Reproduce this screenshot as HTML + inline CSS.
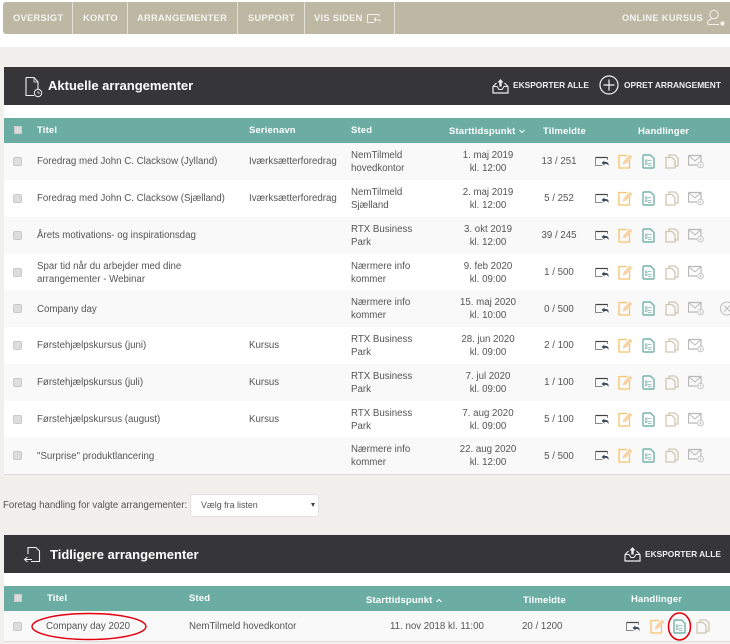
<!DOCTYPE html>
<html><head><meta charset="utf-8"><style>
html,body{margin:0;padding:0}
body{width:730px;height:644px;overflow:hidden;position:relative;background:#fff;font-family:"Liberation Sans",sans-serif;color:#555;font-size:9.7px;filter:blur(.3px)}
div,span,svg{position:absolute}
.t{white-space:nowrap;line-height:13px}
.nav{top:12px;color:#f4f3ee;font-weight:bold;font-size:9.3px;letter-spacing:.3px;line-height:13px;white-space:nowrap}
.sep{top:2px;width:1px;height:32px;background:#e4e2d8}
.h{color:#fff;font-weight:bold;font-size:9.5px;line-height:12px;white-space:nowrap;letter-spacing:.15px}
.dh{color:#fff;font-weight:bold;font-size:13px;line-height:16px;white-space:nowrap}
.ex{color:#eee;font-weight:bold;font-size:8.4px;line-height:12px;white-space:nowrap}
.r{left:4px;width:726px;height:37px}
.o{background:#f9f9f9}
.cb{left:9px;top:14px;width:7px;height:7px;background:#ddd;border:1px solid #c9c9c9;border-radius:2px}
.c{text-align:center;width:100px;white-space:nowrap;line-height:13px}
.l{white-space:nowrap;line-height:13px}
</style></head><body>
<svg width="0" height="0" style="left:0;top:0"><defs>
<symbol id="sh" viewBox="0 0 15 15"><path d="M.5 3.500h12v2.500M.5 3.500v8h7" fill="none" stroke="#8a8a8a"/><path d="M.5 3.500h12" stroke="#444" stroke-width="1.200"/><path d="M9.500 6.500l-3 2.500 3 2.500v-1.500h2.500l1.500 2v-2.500l-1.500-1.500h-2.500z" fill="#3f4d5c"/></symbol>
<symbol id="ed" viewBox="0 0 15 15"><path d="M9 1.500H1v12.500h10.500V6" fill="none" stroke="#f6c46a" stroke-width="1.300"/><path d="M4.500 10.500l1.200-3.500 6-6.500 2.800 2.500-6.200 6.500z" fill="#f8d3a6"/></symbol>
<symbol id="dc" viewBox="0 0 13 15"><path d="M1 2a1 1 0 0 1 1-1h6.500L12 4.500V13a1 1 0 0 1-1 1H2a1 1 0 0 1-1-1z" fill="none" stroke="#74b2a8" stroke-width="1.400"/><path d="M3.500 6h1.500v1.500H3.500zM3.500 9h1.500v1.500H3.500zM6 6.500h3.500M6 9.500h3.500M6 11.500h3.500" fill="none" stroke="#9cc6bf"/></symbol>
<symbol id="cp" viewBox="0 0 14 15"><path d="M1 3.500h6l3 3V14H1z" fill="none" stroke="#cfc6b2" stroke-width="1.300"/><path d="M4 3V1h6l3 3v8h-3" fill="none" stroke="#cfc6b2" stroke-width="1.300"/></symbol>
<symbol id="ml" viewBox="0 0 16 15"><path d="M.5 1.500h12.500v7M.5 1.500V11h8.500" fill="none" stroke="#b8b8b8" stroke-width="1.200"/><path d="M.5 1.500L7 7l6-5.500" fill="none" stroke="#b8b8b8"/><circle cx="12.500" cy="11" r="2.800" fill="#fff" stroke="#c4c4c4"/><circle cx="12.500" cy="11" r="1" fill="#c4c4c4"/></symbol>
<symbol id="xp" viewBox="0 0 17 16"><path d="M1 8.500V15h15V8.500M1 8.500L4.500 5M16 8.500L12.500 5" fill="none" stroke="#eee" stroke-width="1.200"/><path d="M1 8.500h4l2 3h3l2-3h4" fill="none" stroke="#eee"/><path d="M7.300 8.500V4.500H5.500L8.500 1l3 3.500H9.700v4z" fill="#eee"/></symbol>
</defs></svg>

<div style="left:0;top:47px;width:730px;height:597px;background:#f1f0ec"></div>

<div style="left:3px;top:2px;width:727px;height:32px;background:#bdb8a3;border-radius:3px 0 0 3px"></div>
<div class="nav" style="left:13px">OVERSIGT</div><div class="sep" style="left:72px"></div>
<div class="nav" style="left:83px">KONTO</div><div class="sep" style="left:127px"></div>
<div class="nav" style="left:137px">ARRANGEMENTER</div><div class="sep" style="left:237px"></div>
<div class="nav" style="left:248px">SUPPORT</div><div class="sep" style="left:304px"></div>
<div class="nav" style="left:314px">VIS SIDEN</div><div class="sep" style="left:394px"></div>
<svg style="left:367px;top:12px" width="16" height="13" viewBox="0 0 16 13"><path d="M.5 2.500h11.500v2M.5 2.500v8h7" fill="none" stroke="#f1f0ea"/><path d="M9 5l-2.500 2.500L9 10V8.500h3l1.500 2V7.500H9z" fill="#f1f0ea"/></svg>
<div class="nav" style="left:622px">ONLINE KURSUS</div>
<svg style="left:706px;top:9px" width="20" height="19" viewBox="0 0 20 19"><circle cx="8" cy="5.500" r="4.200" fill="none" stroke="#f1f0ea"/><path d="M5.500 10Q1.500 11.500 1.500 14Q1.500 15.500 3 15.500H13" fill="none" stroke="#f1f0ea"/><circle cx="16.500" cy="14.500" r="2.200" fill="#f1f0ea"/></svg>

<!-- Panel 1 -->
<div style="left:4px;top:67px;width:726px;height:407px;background:#fff;border-bottom:1px solid #ddd"></div>
<div style="left:4px;top:67px;width:726px;height:38px;background:#363638"></div>
<svg style="left:25px;top:76px" width="19" height="22" viewBox="0 0 19 22"><path d="M1 1.500h8l4 4.500v7M1 1.500V19.500h8" fill="none" stroke="#eee" stroke-width="1.100"/><path d="M9 1.500V6h4" fill="none" stroke="#eee" stroke-width=".8"/><circle cx="13" cy="17" r="3.700" fill="#363638" stroke="#eee"/><path d="M13 15v2h2" fill="none" stroke="#eee" stroke-width=".8"/></svg>
<div class="dh" style="left:48px;top:78px">Aktuelle arrangementer</div>
<svg style="left:492px;top:78px" width="17" height="16"><use href="#xp"/></svg>
<div class="ex" style="left:513px;top:79px">EKSPORTER ALLE</div>
<svg style="left:599px;top:75px" width="20" height="20" viewBox="0 0 20 20"><circle cx="10" cy="10" r="9" fill="none" stroke="#f4f4f4" stroke-width="1.200"/><path d="M10 4.500v11M4.500 10h11" stroke="#f4f4f4" stroke-width="1.200"/></svg>
<div class="ex" style="left:624px;top:79px">OPRET ARRANGEMENT</div>

<div style="left:4px;top:118px;width:726px;height:25px;background:#6bada3"></div>
<div style="left:14px;top:126px;width:6px;height:6px;background:#dcdcdc;border:1px solid #ccc"></div>
<div class="h" style="left:37px;top:125px">Titel</div>
<div class="h" style="left:249px;top:125px">Serienavn</div>
<div class="h" style="left:351px;top:125px">Sted</div>
<div class="h" style="left:449px;top:126px">Starttidspunkt</div>
<svg style="left:519px;top:129px" width="6" height="5" viewBox="0 0 6 5"><path d="M.5 1L3 3.500 5.500 1" fill="none" stroke="#fff"/></svg>
<div class="h" style="left:543px;top:126px">Tilmeldte</div>
<div class="h" style="left:638px;top:126px">Handlinger</div>

<div class="r o" style="top:143px"><div class="cb"></div><div class="l" style="left:33px;top:12px">Foredrag med John C. Clacksow (Jylland)</div><div class="l" style="left:245px;top:12px">Iværksætterforedrag</div><div class="l" style="left:347px;top:6px">NemTilmeld<br>hovedkontor</div><div class="c" style="left:434px;top:6px">1. maj 2019<br>kl. 12:00</div><div class="c" style="left:505px;top:12px">13 / 251</div>
<svg style="left:591px;top:11px" width="15" height="15"><use href="#sh"/></svg><svg style="left:614px;top:11px" width="15" height="15"><use href="#ed"/></svg><svg style="left:638px;top:11px" width="13" height="15"><use href="#dc"/></svg><svg style="left:661px;top:11px" width="14" height="15"><use href="#cp"/></svg><svg style="left:684px;top:11px" width="16" height="15"><use href="#ml"/></svg></div>

<div class="r" style="top:180px"><div class="cb"></div><div class="l" style="left:33px;top:12px">Foredrag med John C. Clacksow (Sjælland)</div><div class="l" style="left:245px;top:12px">Iværksætterforedrag</div><div class="l" style="left:347px;top:6px">NemTilmeld<br>Sjælland</div><div class="c" style="left:434px;top:6px">2. maj 2019<br>kl. 12:00</div><div class="c" style="left:505px;top:12px">5 / 252</div>
<svg style="left:591px;top:11px" width="15" height="15"><use href="#sh"/></svg><svg style="left:614px;top:11px" width="15" height="15"><use href="#ed"/></svg><svg style="left:638px;top:11px" width="13" height="15"><use href="#dc"/></svg><svg style="left:661px;top:11px" width="14" height="15"><use href="#cp"/></svg><svg style="left:684px;top:11px" width="16" height="15"><use href="#ml"/></svg></div>

<div class="r o" style="top:217px"><div class="cb"></div><div class="l" style="left:33px;top:12px">Årets motivations- og inspirationsdag</div><div class="l" style="left:347px;top:6px">RTX Business<br>Park</div><div class="c" style="left:434px;top:6px">3. okt 2019<br>kl. 12:00</div><div class="c" style="left:505px;top:12px">39 / 245</div>
<svg style="left:591px;top:11px" width="15" height="15"><use href="#sh"/></svg><svg style="left:614px;top:11px" width="15" height="15"><use href="#ed"/></svg><svg style="left:638px;top:11px" width="13" height="15"><use href="#dc"/></svg><svg style="left:661px;top:11px" width="14" height="15"><use href="#cp"/></svg><svg style="left:684px;top:11px" width="16" height="15"><use href="#ml"/></svg></div>

<div class="r" style="top:254px"><div class="cb"></div><div class="l" style="left:33px;top:6px">Spar tid når du arbejder med dine<br>arrangementer - Webinar</div><div class="l" style="left:347px;top:6px">Nærmere info<br>kommer</div><div class="c" style="left:434px;top:6px">9. feb 2020<br>kl. 09:00</div><div class="c" style="left:505px;top:12px">1 / 500</div>
<svg style="left:591px;top:11px" width="15" height="15"><use href="#sh"/></svg><svg style="left:614px;top:11px" width="15" height="15"><use href="#ed"/></svg><svg style="left:638px;top:11px" width="13" height="15"><use href="#dc"/></svg><svg style="left:661px;top:11px" width="14" height="15"><use href="#cp"/></svg><svg style="left:684px;top:11px" width="16" height="15"><use href="#ml"/></svg></div>

<div class="r o" style="top:290px"><div class="cb"></div><div class="l" style="left:33px;top:13px">Company day</div><div class="l" style="left:347px;top:6px">Nærmere info<br>kommer</div><div class="c" style="left:434px;top:6px">15. maj 2020<br>kl. 10:00</div><div class="c" style="left:505px;top:13px">0 / 500</div>
<svg style="left:591px;top:11px" width="15" height="15"><use href="#sh"/></svg><svg style="left:614px;top:11px" width="15" height="15"><use href="#ed"/></svg><svg style="left:638px;top:11px" width="13" height="15"><use href="#dc"/></svg><svg style="left:661px;top:11px" width="14" height="15"><use href="#cp"/></svg><svg style="left:684px;top:11px" width="16" height="15"><use href="#ml"/></svg>
<svg style="left:715px;top:11px" width="14" height="15" viewBox="0 0 14 15"><circle cx="8" cy="7.500" r="6.500" fill="none" stroke="#bbb"/><path d="M5 4.500l6 6M11 4.500l-6 6" stroke="#bbb"/></svg></div>

<div class="r" style="top:327px"><div class="cb"></div><div class="l" style="left:33px;top:12px">Førstehjælpskursus (juni)</div><div class="l" style="left:245px;top:12px">Kursus</div><div class="l" style="left:347px;top:6px">RTX Business<br>Park</div><div class="c" style="left:434px;top:6px">28. jun 2020<br>kl. 09:00</div><div class="c" style="left:505px;top:12px">2 / 100</div>
<svg style="left:591px;top:11px" width="15" height="15"><use href="#sh"/></svg><svg style="left:614px;top:11px" width="15" height="15"><use href="#ed"/></svg><svg style="left:638px;top:11px" width="13" height="15"><use href="#dc"/></svg><svg style="left:661px;top:11px" width="14" height="15"><use href="#cp"/></svg><svg style="left:684px;top:11px" width="16" height="15"><use href="#ml"/></svg></div>

<div class="r o" style="top:364px"><div class="cb"></div><div class="l" style="left:33px;top:12px">Førstehjælpskursus (juli)</div><div class="l" style="left:245px;top:12px">Kursus</div><div class="l" style="left:347px;top:6px">RTX Business<br>Park</div><div class="c" style="left:434px;top:6px">7. jul 2020<br>kl. 09:00</div><div class="c" style="left:505px;top:12px">1 / 100</div>
<svg style="left:591px;top:11px" width="15" height="15"><use href="#sh"/></svg><svg style="left:614px;top:11px" width="15" height="15"><use href="#ed"/></svg><svg style="left:638px;top:11px" width="13" height="15"><use href="#dc"/></svg><svg style="left:661px;top:11px" width="14" height="15"><use href="#cp"/></svg><svg style="left:684px;top:11px" width="16" height="15"><use href="#ml"/></svg></div>

<div class="r" style="top:401px"><div class="cb"></div><div class="l" style="left:33px;top:12px">Førstehjælpskursus (august)</div><div class="l" style="left:245px;top:12px">Kursus</div><div class="l" style="left:347px;top:6px">RTX Business<br>Park</div><div class="c" style="left:434px;top:6px">7. aug 2020<br>kl. 09:00</div><div class="c" style="left:505px;top:12px">5 / 100</div>
<svg style="left:591px;top:11px" width="15" height="15"><use href="#sh"/></svg><svg style="left:614px;top:11px" width="15" height="15"><use href="#ed"/></svg><svg style="left:638px;top:11px" width="13" height="15"><use href="#dc"/></svg><svg style="left:661px;top:11px" width="14" height="15"><use href="#cp"/></svg><svg style="left:684px;top:11px" width="16" height="15"><use href="#ml"/></svg></div>

<div class="r o" style="top:437px"><div class="cb"></div><div class="l" style="left:33px;top:13px">"Surprise" produktlancering</div><div class="l" style="left:347px;top:6px">Nærmere info<br>kommer</div><div class="c" style="left:434px;top:6px">22. aug 2020<br>kl. 12:00</div><div class="c" style="left:505px;top:13px">5 / 500</div>
<svg style="left:591px;top:11px" width="15" height="15"><use href="#sh"/></svg><svg style="left:614px;top:11px" width="15" height="15"><use href="#ed"/></svg><svg style="left:638px;top:11px" width="13" height="15"><use href="#dc"/></svg><svg style="left:661px;top:11px" width="14" height="15"><use href="#cp"/></svg><svg style="left:684px;top:11px" width="16" height="15"><use href="#ml"/></svg></div>

<!-- Select -->
<div class="t" style="left:3px;top:499px">Foretag handling for valgte arrangementer:</div>
<div style="left:190px;top:494px;width:127px;height:21px;background:#fff;border:1px solid #e2e2e2;border-radius:3px"></div>
<div class="t" style="left:201px;top:499px;font-size:8.9px">Vælg fra listen</div>
<div style="left:311px;top:503px;width:0;height:0;border-left:2px solid transparent;border-right:2px solid transparent;border-top:4px solid #444"></div>

<!-- Panel 2 -->
<div style="left:4px;top:535px;width:726px;height:106px;background:#fff;border-bottom:1px solid #ddd"></div>
<div style="left:4px;top:535px;width:726px;height:38px;background:#363638"></div>
<svg style="left:23px;top:546px" width="18" height="19" viewBox="0 0 18 19"><path d="M5 8V1.500h8l3.500 3.500v10.500H8" fill="none" stroke="#eee" stroke-width="1.100"/><path d="M9 13.500H2M4.500 11l-3 2.500 3 2.500" fill="none" stroke="#eee"/></svg>
<div class="dh" style="left:50px;top:547px">Tidligere arrangementer</div>
<svg style="left:624px;top:546px" width="17" height="16"><use href="#xp"/></svg>
<div class="ex" style="left:645px;top:548px">EKSPORTER ALLE</div>

<div style="left:4px;top:586px;width:726px;height:25px;background:#6bada3"></div>
<div style="left:14px;top:594px;width:6px;height:6px;background:#dcdcdc;border:1px solid #ccc"></div>
<div class="h" style="left:47px;top:593px">Titel</div>
<div class="h" style="left:189px;top:593px">Sted</div>
<div class="h" style="left:366px;top:595px">Starttidspunkt</div>
<svg style="left:436px;top:598px" width="6" height="5" viewBox="0 0 6 5"><path d="M.5 4L3 1.500 5.500 4" fill="none" stroke="#fff"/></svg>
<div class="h" style="left:523px;top:595px">Tilmeldte</div>
<div class="h" style="left:631px;top:594px">Handlinger</div>

<div style="left:4px;top:611px;width:726px;height:30px;background:#f9f9f9"></div>
<div style="left:13px;top:622px;width:7px;height:7px;background:#ddd;border:1px solid #c9c9c9;border-radius:2px"></div>
<div class="t" style="left:46px;top:620px">Company day 2020</div>
<div class="t" style="left:189px;top:620px">NemTilmeld hovedkontor</div>
<div class="t" style="left:390px;top:620px">11. nov 2018 kl. 11:00</div>
<div class="t" style="left:522px;top:620px">20 / 1200</div>
<svg style="left:626px;top:619px" width="15" height="15"><use href="#sh"/></svg>
<svg style="left:650px;top:619px" width="15" height="15"><use href="#ed"/></svg>
<svg style="left:673px;top:619px" width="13" height="15"><use href="#dc"/></svg>
<svg style="left:696px;top:619px" width="14" height="15"><use href="#cp"/></svg>

<svg style="left:0;top:600px" width="730" height="44" viewBox="0 0 730 44"><ellipse cx="89" cy="26.500" rx="57" ry="13" fill="none" stroke="#e3000f" stroke-width="1.400"/><ellipse cx="679.500" cy="26.500" rx="11" ry="13.500" fill="none" stroke="#e3000f" stroke-width="1.600"/></svg>
</body></html>
